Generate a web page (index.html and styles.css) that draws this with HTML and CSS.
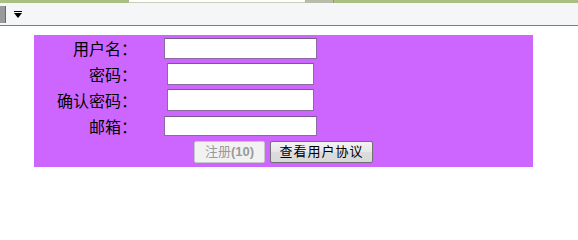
FILE: index.html
```html
<!DOCTYPE html>
<html lang="zh-CN">
<head>
<meta charset="utf-8">
<title>注册</title>
<link rel="stylesheet" href="styles.css">
</head>
<body>
<div class="tabs">
  <div class="tab-green tab-left"></div>
  <div class="tab-active"></div>
  <div class="tab-gray"></div>
  <div class="tab-green tab-rest"></div>
</div>
<div class="toolbar">
  <div class="tool-block"></div>
  <div class="tool-arrow"></div>
</div>
<div class="page">
  <form class="form">
    <div class="row">
      <label class="label">用户名：</label>
      <input class="field field-a" type="text">
    </div>
    <div class="row">
      <label class="label">密码：</label>
      <input class="field field-b" type="password">
    </div>
    <div class="row">
      <label class="label">确认密码：</label>
      <input class="field field-b" type="password">
    </div>
    <div class="row">
      <label class="label">邮箱：</label>
      <input class="field field-a field-short" type="text">
    </div>
    <div class="actions">
      <button class="btn btn-disabled" type="button" disabled>注册<b class="count">(10)</b></button>
      <button class="btn btn-wide" type="button">查看用户协议</button>
    </div>
  </form>
</div>
</body>
</html>
```
FILE: styles.css
```css
html, body {
  margin: 0;
  padding: 0;
  background: #ffffff;
  font-family: "Noto Sans CJK SC", "Liberation Sans", sans-serif;
}

.tabs {
  display: flex;
  height: 3px;
}
.tab-green {
  background: #a9c083;
}
.tab-left { width: 128px; }
.tab-active {
  width: 178px;
  box-sizing: border-box;
  background: #ffffff;
  border-left: 1px solid #a9b88e;
  border-right: 1px solid #a9b88e;
  border-bottom: 1px solid #c8cfb8;
}
.tab-gray {
  width: 27px;
  background: #b9bca8;
  border-right: 1px solid #8fa070;
}
.tab-rest { flex: 1; }

.toolbar {
  height: 22px;
  background: #f5f6f7;
  border-bottom: 1px solid #7d7d7d;
  display: flex;
  align-items: center;
}
.tool-block {
  width: 5px;
  height: 17px;
  background: #9a9a9a;
  border-right: 1px solid #6a6a6a;
}
.tool-arrow {
  margin-left: 8px;
  margin-top: 2px;
  width: 0;
  height: 0;
  border-left: 4px solid transparent;
  border-right: 4px solid transparent;
  border-top: 5px solid #000000;
  position: relative;
}
.tool-arrow::before {
  content: "";
  position: absolute;
  left: -4px;
  top: -7px;
  width: 8px;
  height: 1px;
  background: #000000;
}

.page {
  padding: 9px 0 0 34px;
}

.form {
  margin: 0;
  width: 499px;
  height: 132px;
  box-sizing: border-box;
  background: #cc66ff;
  display: flex;
  flex-direction: column;
}

.row {
  height: 26px;
  display: flex;
  align-items: center;
}

.label {
  width: 103px;
  flex: none;
  text-align: right;
  font-size: 16px;
  line-height: 18px;
  color: #000000;
}

.field {
  box-sizing: border-box;
  height: 22px;
  margin: 0;
  padding: 1px 2px;
  background: #ffffff;
  border: 1px solid #8a6aa0;
  border-top-color: #7a5a90;
  font-size: 13px;
}
.field-a {
  margin-left: 27px;
  width: 153px;
  height: 21px;
}
.field-b {
  margin-left: 30px;
  width: 147px;
}
.field-short {
  height: 20px;
}

.actions {
  height: 26px;
  display: flex;
  align-items: center;
  justify-content: center;
  gap: 5px;
}

.btn {
  box-sizing: border-box;
  height: 22px;
  margin: 0;
  padding: 0 4px;
  font-family: "Liberation Sans", "Noto Sans CJK SC", sans-serif;
  font-size: 13px;
  line-height: 18px;
  color: #000000;
  border: 1px solid #707070;
  border-radius: 2px;
  background: linear-gradient(#f2f2f2, #e6e6e6 50%, #dcdcdc 51%, #d8d8d8);
}
.btn-disabled {
  width: 71px;
  color: #9a9a9a;
  border-color: #c8c8c8;
  background: #f2f2f2;
}
.count {
  font-weight: bold;
}
.btn-wide {
  width: 103px;
  letter-spacing: 1px;
}
```
